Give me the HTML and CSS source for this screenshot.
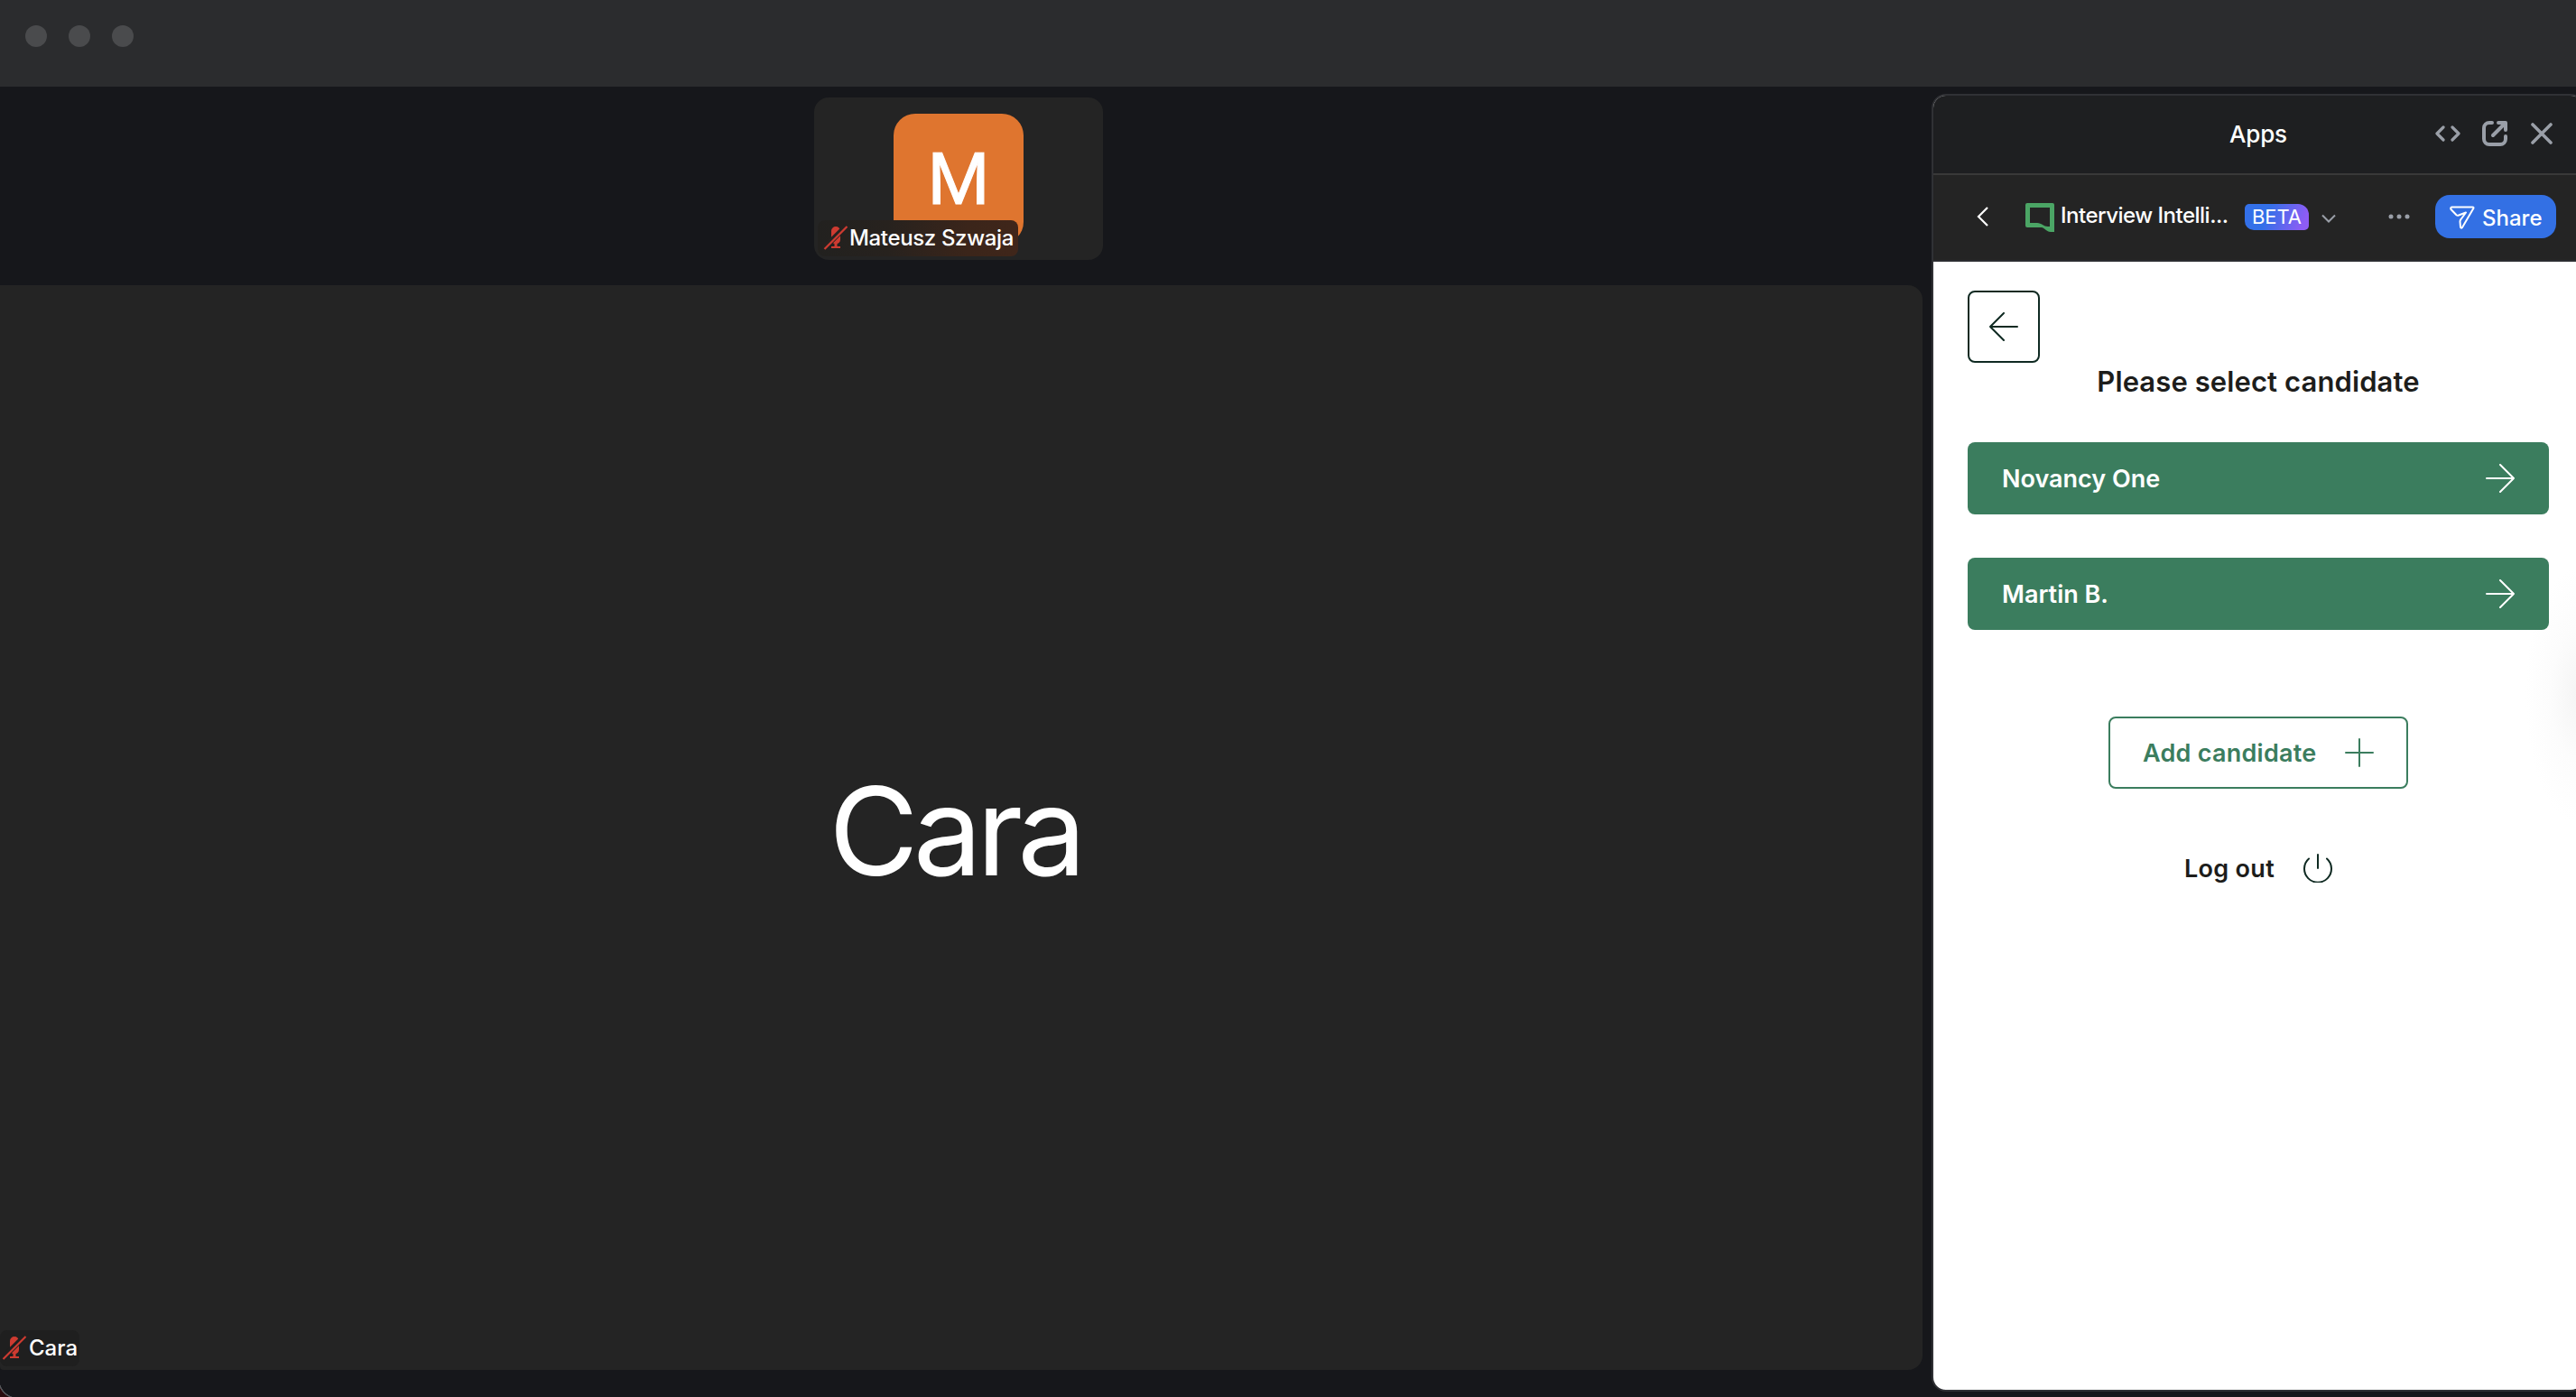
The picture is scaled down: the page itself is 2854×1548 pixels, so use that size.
FILE: index.html
```html
<!DOCTYPE html>
<html lang="en">
<head>
<meta charset="utf-8">
<title>Meeting</title>
<link rel="stylesheet" href="styles.css">
</head>
<body>
<header class="titlebar"><span class="dot"></span><span class="dot"></span><span class="dot"></span></header>
<div class="workspace">
  <main class="meeting">
    <section class="thumb">
      <div class="avatar">M</div>
      <div class="name-tag thumb-tag">
        <svg class="mic" viewBox="0 0 28 28"><g fill="#ce3b31"><path d="M9 6a5 5 0 0 1 10 0v9.500a5 5 0 0 1-10 0z"/><path d="M12.500 19h3v4h-3zM9 23h10v2H9z"/></g><path d="M0 26 25 1" stroke="#252220" stroke-width="6"/><path d="M1.500 26 26.500 1" stroke="#ce3b31" stroke-width="2.200"/></svg>
        <span class="tag-name tight">Mateusz Szwaja</span>
      </div>
    </section>
    <section class="stage">
      <div class="speaker">Cara</div>
      <div class="name-tag stage-tag">
        <svg class="mic" viewBox="0 0 28 28"><g fill="#ce3b31"><path d="M9 6a5 5 0 0 1 10 0v9.500a5 5 0 0 1-10 0z"/><path d="M12.500 19h3v4h-3zM9 23h10v2H9z"/></g><path d="M0 26 25 1" stroke="#1f1f1f" stroke-width="6"/><path d="M1.500 26 26.500 1" stroke="#ce3b31" stroke-width="2.200"/></svg>
        <span class="tag-name">Cara</span>
      </div>
    </section>
  </main>
  <aside class="panel">
    <div class="panel-head">
      <span class="panel-title">Apps</span>
      <div class="head-tools">
        <svg width="28" height="28" viewBox="0 0 28 28" fill="none" stroke="#9a9fa8" stroke-width="3.200" stroke-linecap="round" stroke-linejoin="round"><path d="M9 7 2 14l7 7M19 7l7 7-7 7"/></svg>
        <svg width="28" height="28" viewBox="0 0 28 28" fill="none" stroke="#9a9fa8" stroke-width="4" stroke-linecap="round"><path d="M11 2H8a6 6 0 0 0-6 6v12a6 6 0 0 0 6 6h12a6 6 0 0 0 6-6v-3"/><path d="M12 16 24 4"/><path d="M18 2h8v8" stroke-linejoin="round"/></svg>
        <svg class="close" width="24" height="24" viewBox="0 0 24 24" stroke="#9a9fa8" stroke-width="3.600" stroke-linecap="round"><path d="M2 2l20 20M22 2 2 22"/></svg>
      </div>
    </div>
    <div class="app-bar">
      <svg class="chev-left" viewBox="0 0 14 24" fill="none" stroke="#fff" stroke-width="2.200"><path d="M12 2 2 12l10 10"/></svg>
      <svg class="app-logo" viewBox="0 0 32 32"><path fill="#4ba565" fill-rule="evenodd" d="M2 0h28a2 2 0 0 1 2 2v30h-4c-5 0-7-5-10-5H2a2 2 0 0 1-2-2V2a2 2 0 0 1 2-2zm3 5v17h8c5 0 7 4 12 4h2V5z"/></svg>
      <span class="app-name">Interview Intelli...</span>
      <span class="beta">BETA</span>
      <svg class="chev-down" viewBox="0 0 16 10" fill="none" stroke="#9a9fa8" stroke-width="2"><path d="M1 1.500 8 8.500l7-7"/></svg>
      <svg class="more" viewBox="0 0 24 6" fill="#9a9fa8"><circle cx="3" cy="3" r="2.500"/><circle cx="12" cy="3" r="2.500"/><circle cx="21" cy="3" r="2.500"/></svg>
      <button class="share"><svg width="28" height="26" viewBox="0 0 28 26" fill="none" stroke="#fff" stroke-width="2" stroke-linejoin="round"><path d="M2.500 1.500h23q1.500 0 .8 1.500L14 24q-1.500 1.500-2-.5l-.5-6q0-1.500 1-2.500l5.500-7.500-8 3q-1.500.5-2.500-.3L1.500 4q-1-2 1-2.500z"/></svg><span>Share</span></button>
    </div>
    <div class="panel-body">
      <button class="back"><svg width="32" height="32" viewBox="0 0 32 32" fill="none" stroke="#0f2a22" stroke-width="2" stroke-linecap="round" stroke-linejoin="round"><path d="M31 16H1M16 1 1 16l15 15"/></svg></button>
      <h1>Please select candidate</h1>
      <button class="candidate"><span>Novancy One</span><svg width="32" height="32" viewBox="0 0 32 32" fill="none" stroke="#fff" stroke-width="2" stroke-linecap="round" stroke-linejoin="round"><path d="M1 16h30M16 1l15 15-15 15"/></svg></button>
      <button class="candidate"><span>Martin B.</span><svg width="32" height="32" viewBox="0 0 32 32" fill="none" stroke="#fff" stroke-width="2" stroke-linecap="round" stroke-linejoin="round"><path d="M1 16h30M16 1l15 15-15 15"/></svg></button>
      <button class="add"><span>Add candidate</span><svg width="32" height="32" viewBox="0 0 32 32" stroke="#3b7d5e" stroke-width="2" stroke-linecap="round"><path d="M1 16h30M16 1v30"/></svg></button>
      <button class="logout"><span>Log out</span><svg width="32" height="32" viewBox="0 0 32 32" fill="none" stroke="#0f2a22" stroke-width="2" stroke-linecap="round"><path d="M16 1v15M6 5.500a15 15 0 1 0 20 0"/></svg></button>
    </div>
  </aside>
</div>
</body>
</html>
```
FILE: styles.css
```css
* { box-sizing: border-box; }
body { margin: 0; width: 2854px; height: 1548px; overflow: hidden; background: #16171b; color: #fff; font-family: Inter, "Liberation Sans", sans-serif; display: flex; flex-direction: column; }
button { font: inherit; border: 0; margin: 0; padding: 0; background: none; color: inherit; }
svg { display: block; flex: none; }
span { white-space: nowrap; }

.titlebar { height: 96px; flex: none; background: #2b2c2e; display: flex; gap: 24px; padding: 28px; }
.dot { width: 24px; height: 24px; border-radius: 50%; background: #4a4b4d; }
.workspace { flex: 1; display: flex; gap: 10px; min-height: 0; }

/* Meeting area */
.meeting { position: relative; width: 2130px; flex: none; padding-top: 12px; display: flex; flex-direction: column; align-items: center; gap: 28px; }
/* Rounded corner of the window */
.meeting::after { content: ""; position: absolute; left: 0; bottom: 0; width: 18px; height: 18px; background: radial-gradient(circle at 20px -2px, transparent 20.5px, #55565a 21px, #55565a 22px, #2c0d0f 22.5px); }
.thumb { position: relative; width: 320px; height: 180px; margin-right: 6px; border-radius: 16px; background: #242424; padding-top: 18px; display: flex; justify-content: center; align-items: flex-start; }
.avatar { width: 144px; height: 144px; padding-top: 2px; border-radius: 24px; background: #df752f; display: flex; align-items: center; justify-content: center; font: 400 79px/144px Roboto, sans-serif; -webkit-text-stroke: 1px #fff; }
.name-tag { position: absolute; height: 40px; display: flex; align-items: center; border-radius: 8px; font-size: 24px; font-weight: 500; }
.tag-name { padding-bottom: 2px; }
.tight { letter-spacing: -.35px; }
.thumb-tag { left: 4px; bottom: 4px; width: 222px; padding-left: 6px; gap: 1px; background: linear-gradient(90deg, #22211f, #27221e 35%, #3b251a 75%, #40261a); }
.mic { width: 28px; height: 28px; }
.stage { position: relative; width: 2130px; height: 1202px; border-radius: 0 16px 16px 4px; background: #242424; display: flex; align-items: center; justify-content: center; }
.speaker { font-size: 136px; line-height: 1; letter-spacing: -6px; padding: 8px 14px 0 0; }
.stage-tag { left: 0; bottom: 4px; width: 88px; padding-left: 2px; gap: 2px; background: #1f1f1f; }

/* Apps panel */
.panel { width: 724px; height: 1438px; margin-top: 8px; flex: none; border: 2px solid #303135; border-radius: 16px; overflow: hidden; background: #fff; display: flex; flex-direction: column; }
.panel-head { height: 88px; flex: none; background: #1e1f21; border-bottom: 2px solid #393939; display: grid; place-items: center; position: relative; font-size: 26px; font-weight: 500; }
.panel-title { padding-bottom: 2px; letter-spacing: -.2px; }
.head-tools { position: absolute; left: 556px; top: 28px; display: flex; align-items: center; gap: 24px; }
.close { margin-left: 2px; }
.app-bar { height: 96px; flex: none; background: #242424; border-bottom: 2px solid #2b2c30; display: flex; align-items: center; padding: 0 0 2px 48px; }
.chev-left { width: 14px; height: 24px; }
.app-logo { width: 32px; height: 32px; margin: 2px 0 0 40px; }
.app-name { font-size: 24px; font-weight: 500; margin-left: 7px; width: 187px; letter-spacing: -.5px; padding-bottom: 4px; }
.beta { width: 71px; height: 29px; line-height: 28px; text-align: center; border-radius: 5px 12px 5px 10px; background: linear-gradient(110deg, #3370e8 35%, #8e5cf5 90%); font-size: 22px; margin: 1px 0 0 17px; }
.chev-down { width: 16px; height: 10px; margin: 3px 0 0 14px; }
.more { width: 24px; height: 6px; margin-left: 58px; }
.share { width: 134px; height: 48px; border-radius: 16px; background: #3370e4; display: flex; align-items: center; padding: 2px 0 0 16px; gap: 8px; margin-left: 28px; font-size: 24px; font-weight: 500; }
.panel-body { position: relative; width: 720px; flex: 1; padding: 32px 38px; display: flex; flex-direction: column; align-items: flex-start; color: #1d1d1b; }
.panel-body > * { flex: none; }
/* Soft shade on the right edge */
.panel-body::after { content: ""; position: absolute; right: 8px; top: 340px; width: 56px; height: 280px; background: radial-gradient(ellipse 56px 140px at 100% 50%, #f5f5f5, #fcfcfc 50%, transparent); }
.back { width: 80px; height: 80px; border: 2px solid #0f2a22; border-radius: 8px; display: grid; place-items: center; }
h1 { margin: 0; width: 644px; height: 88px; font-size: 31px; font-weight: 600; line-height: 42px; letter-spacing: .1px; text-align: center; }
.candidate { position: relative; z-index: 1; width: 644px; height: 80px; border-radius: 8px; background: #3b7d5e; color: #fff; display: flex; align-items: center; justify-content: space-between; padding: 0 38px; margin-bottom: 48px; font-size: 27px; font-weight: 600; }
.add { width: 332px; height: 80px; margin: 48px 0 0 156px; border: 2px solid #3b7d5e; border-radius: 8px; color: #3b7d5e; display: flex; align-items: center; justify-content: space-between; padding: 0 36px; font-size: 27px; font-weight: 600; letter-spacing: .25px; }
.logout { width: 164px; height: 32px; margin: 72px 0 0 240px; display: flex; align-items: center; justify-content: space-between; font-size: 27px; font-weight: 600; letter-spacing: .3px; }
```
